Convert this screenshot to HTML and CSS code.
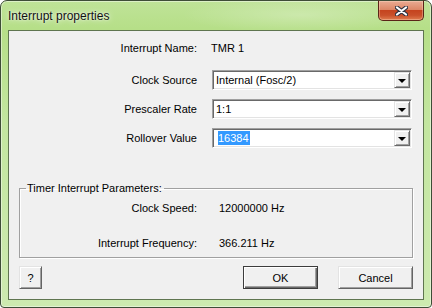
FILE: index.html
```html
<!DOCTYPE html>
<html lang="en">
<head>
<meta charset="utf-8" />
<title>Interrupt properties</title>
<link rel="stylesheet" href="styles.css">
</head>
<body>
<div class="window">

  <div class="titlebar">
    <span class="title">Interrupt properties</span>
    <button class="close">
      <svg width="13" height="10" viewBox="0 0 13 10">
        <path d="M2 1.5 L11 8.5 M11 1.5 L2 8.5" stroke="#2f3340" stroke-width="4.2" stroke-linecap="round" fill="none" />
        <path d="M2 1.5 L11 8.5 M11 1.5 L2 8.5" stroke="#ffffff" stroke-width="2.2" stroke-linecap="round" fill="none" />
      </svg>
    </button>
  </div>

  <div class="client">

    <div class="form">
      <span class="label">Interrupt Name:</span>
      <span class="value">TMR 1</span>

      <span class="label">Clock Source</span>
      <div class="combo"><span class="combo-text">Internal (Fosc/2)</span><span class="drop"><i class="tri"></i></span></div>

      <span class="label">Prescaler Rate</span>
      <div class="combo"><span class="combo-text">1:1</span><span class="drop"><i class="tri"></i></span></div>

      <span class="label">Rollover Value</span>
      <div class="combo"><span class="combo-text selected">16384</span><span class="drop"><i class="tri"></i></span></div>
    </div>

    <fieldset class="group">
      <legend>Timer Interrupt Parameters:</legend>
      <div class="group-grid">
        <span class="label">Clock Speed:</span>
        <span class="value">12000000 Hz</span>
        <span class="label">Interrupt Frequency:</span>
        <span class="value">366.211 Hz</span>
      </div>
    </fieldset>

    <div class="buttons">
      <button class="btn btn-help">?</button>
      <span class="spacer"></span>
      <button class="btn btn-default">OK</button>
      <button class="btn">Cancel</button>
    </div>

  </div>
</div>
</body>
</html>
```

FILE: styles.css
```css
body {
  margin: 0;
  background: #ffffff;
  font-family: "Liberation Sans", Arial, sans-serif;
  font-size: 11px;
  color: #000;
}

.window {
  width: 432px;
  height: 308px;
  box-sizing: border-box;
  border: 1px solid #3e4d37;
  border-radius: 7px 7px 4px 4px;
  background:
    radial-gradient(ellipse 120px 18px at 300px 14px, rgba(255, 255, 255, 0.25), transparent),
    linear-gradient(180deg, #bfe398 0%, #b6df88 9%, #c3e6a0 40%, #cdeab0 100%);
  box-shadow: inset 0 0 0 1px rgba(255, 255, 255, 0.45);
  display: flex;
  flex-direction: column;
}

.titlebar {
  height: 29px;
  display: flex;
  align-items: flex-start;
  padding-left: 7px;
}

.title {
  font-size: 12px;
  line-height: 14px;
  margin-top: 8px;
  color: #111;
  text-shadow: 0 0 6px rgba(255, 255, 255, 0.9), 0 0 2px rgba(255, 255, 255, 0.8);
}

.close {
  margin-left: auto;
  margin-right: 7px;
  margin-top: -1px;
  width: 46px;
  height: 21px;
  padding: 0;
  border: 1px solid #5b2417;
  border-top-color: #3e4d37;
  border-radius: 0 0 5px 5px;
  background: linear-gradient(180deg, #e9ab93 0%, #dd8767 45%, #c5441f 50%, #c9502a 75%, #e07d4f 100%);
  box-shadow: inset 0 0 0 1px rgba(255, 230, 210, 0.35);
  display: flex;
  align-items: center;
  justify-content: center;
}

.client {
  flex: 1;
  margin: 0 7px 7px;
  border: 1px solid #5f7550;
  background: #f0f0f0;
  padding: 0 10px;
  display: flex;
  flex-direction: column;
}

.form {
  margin-top: 7px;
  display: grid;
  grid-template-columns: 178px 200px;
  grid-template-rows: 32px 29px 29px 20px;
  column-gap: 15px;
}

.label {
  text-align: right;
  line-height: 20px;
  height: 20px;
}

.value {
  line-height: 20px;
  height: 20px;
}

.form .value {
  margin-left: -1px;
}

.combo {
  width: 200px;
  height: 20px;
  box-sizing: border-box;
  border: 1px solid;
  border-color: #a0a0a0 #ffffff #ffffff #a0a0a0;
  box-shadow: inset 1px 1px 0 #696969, inset -1px -1px 0 #e3e3e3;
  background: #fff;
  display: flex;
  align-items: center;
  padding: 1px 1px 1px 3px;
}

.combo-text {
  flex: 1;
  line-height: 14px;
}

.combo-text.selected {
  flex: none;
  margin-left: 2px;
  padding: 0 1px 0 0;
  background: #3399ff;
  color: #fff;
}

.combo-text.selected + .drop {
  margin-left: auto;
}

.drop {
  width: 16px;
  height: 16px;
  box-sizing: border-box;
  border: 1px solid;
  border-color: #e3e3e3 #696969 #696969 #e3e3e3;
  box-shadow: inset 1px 1px 0 #fff, inset -1px -1px 0 #a0a0a0;
  background: #f0f0f0;
  display: flex;
  align-items: center;
  justify-content: center;
}

.tri {
  width: 0;
  height: 0;
  border-left: 4px solid transparent;
  border-right: 4px solid transparent;
  border-top: 4px solid #000;
  margin-top: 1px;
}

.group {
  margin: 34px 0 0;
  padding: 3px 0 4px;
  border: 1px solid #a0a0a0;
  box-shadow: 1px 1px 0 #fff, inset 1px 1px 0 #fff;
  min-width: 0;
}

.group legend {
  margin-left: 6px;
  padding: 0 2px 0 1px;
  line-height: 13px;
}

.group-grid {
  display: grid;
  grid-template-columns: 177px auto;
  grid-template-rows: 20px 20px;
  column-gap: 22px;
  row-gap: 15px;
}

.buttons {
  margin-top: 8px;
  display: flex;
  gap: 20px;
}

.spacer {
  flex: 1;
}

.btn {
  height: 23px;
  width: 75px;
  padding: 0;
  font-family: "Liberation Sans", Arial, sans-serif;
  font-size: 11px;
  color: #000;
  background: #f0f0f0;
  border: 1px solid;
  border-color: #e3e3e3 #646464 #646464 #e3e3e3;
  box-shadow: inset 1px 1px 0 #fff, inset -1px -1px 0 #a0a0a0;
}

.btn-help {
  width: 23px;
}

.btn-default {
  border-color: #3c3c3c;
  box-shadow: inset 1px 1px 0 #fff, inset -1px -1px 0 #696969, inset -2px -2px 0 #a0a0a0;
}
```
